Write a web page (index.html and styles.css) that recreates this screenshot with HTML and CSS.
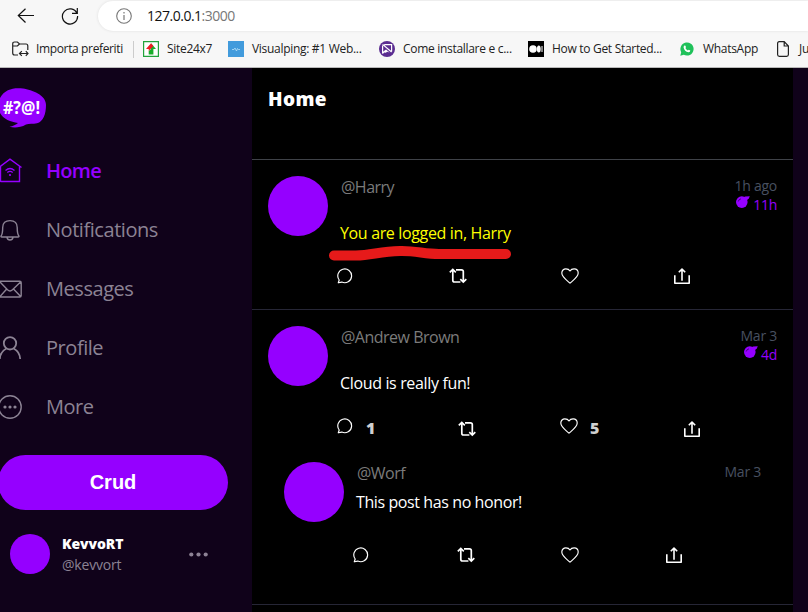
FILE: index.html
```html
<!DOCTYPE html>
<html lang="en">
<head>
<meta charset="utf-8">
<title>Home</title>
<link rel="stylesheet" href="styles.css">
</head>
<body>
<svg width="0" height="0" class="defs">
  <symbol id="reply" viewBox="0 0 16 16"><path d="M1.3 14.8 2.2 12A6.9 6.9 0 1 1 4.8 14.1Z" fill="none" stroke="currentColor" stroke-width="1.15" stroke-linejoin="round"/></symbol>
  <symbol id="repost" viewBox="0 0 18 16"><path d="M3.8 2.2V12.2Q3.8 14 5.6 14H11.4M.8 4.4 3.8 1.5 6.8 4.4M7 1.8H12.4Q14.3 1.8 14.3 3.6V13.5M11.3 11.2 14.3 14.1 17.3 11.2" fill="none" stroke="currentColor" stroke-width="1.7"/></symbol>
  <symbol id="heart" viewBox="0 0 18 16"><path d="M9 15.2C6.4 12.8.8 9.2.8 5.1.8 2.5 2.6.8 4.9.8 6.7.8 8.2 1.6 9 3 9.8 1.6 11.3.8 13.1.8c2.3 0 4.1 1.7 4.1 4.3 0 4.1-5.6 7.7-8.2 10.1Z" fill="none" stroke="currentColor" stroke-width="1.15" stroke-linejoin="round"/></symbol>
  <symbol id="share" viewBox="0 0 16 16"><path d="M.8 7.3V15.2H15.2V7.3M8 12.7V1.2M4.8 4.3 8 1.1 11.2 4.3" fill="none" stroke="currentColor" stroke-width="1.6" stroke-linejoin="round"/></symbol>
  <symbol id="bomb" viewBox="0 0 14 12"><circle cx="5.8" cy="6.1" r="5.8" fill="currentColor"/><path d="M7 1.6 9.2.4 13.8.2 12.8 2.4 10.6 4.4Z" fill="currentColor"/><path d="M2.2 5.5Q2.8 3.3 5 2.8" fill="none" stroke="#000" stroke-width=".5"/></symbol>
</svg>

<header class="browser">
  <div class="toolbar">
    <svg class="back" width="18" height="16" viewBox="0 0 18 16"><path d="M17 7.5H1.5M8.5.8 1.3 7.5 8.5 14.5" fill="none" stroke="#111" stroke-width="1.2"/></svg>
    <svg class="reload" width="18" height="18" viewBox="0 0 18 18"><path d="M15.9 6.2A7.6 7.6 0 1 0 16.6 9M16.3 1V6.3H11" fill="none" stroke="#111" stroke-width="1.2"/></svg>
    <div class="address">
      <svg width="16" height="16" viewBox="0 0 16 16"><circle cx="8" cy="8" r="7.3" fill="none" stroke="#777" stroke-width="1.1"/><path d="M8 7V12M8 4V5.4" stroke="#777" stroke-width="1.2"/></svg>
      <span class="url">127.0.0.1<span class="port">:3000</span></span>
    </div>
  </div>
  <nav class="bookmarks">
    <a class="bm import"><svg width="17" height="16" viewBox="0 0 17 16"><path d="M6 14H2.6Q.7 14 .7 12V3Q.7 1 2.6 1H5.4L7.5 3H14Q15.8 3 15.8 5V9M.7 5H5.4L7.5 3M7.5 12.5H16M9.8 10.2 7.5 12.5 9.8 14.8M13.8 10.2 16 12.5 13.8 14.8" fill="none" stroke="#222" stroke-width="1.2"/></svg><span>Importa preferiti</span></a>
    <a class="bm site"><svg width="16" height="16" viewBox="0 0 16 16"><path d="M.6.6H15.4V15.4H.6Z" fill="#fff" stroke="#22a33c" stroke-width="1.2"/><path d="M8 2.2 13 8H10.4V13.5H5.7V10L8 8Z" fill="#19ad2b"/><path d="M8 2.2 3 8H5.7V10L10.4 5Z" fill="#ed1c24"/></svg><span>Site24x7</span></a>
    <a class="bm visual"><svg width="16" height="16" viewBox="0 0 16 16"><path d="M0 0H16V16H0Z" fill="#429bdc"/><path d="M4 8.5H6L7 7 8.5 10 9.5 7.5 10.3 8.5H12" fill="none" stroke="#b8e1f8" stroke-width=".8"/></svg><span>Visualping: #1 Web...</span></a>
    <a class="bm come"><svg width="16" height="16" viewBox="0 0 16 16"><circle cx="8" cy="8" r="8" fill="#5b2d91"/><path d="M3.6 3.4 12.6 11M5.2 3.6H12.6V10.6M3.6 4.6V12.4" fill="none" stroke="#fff" stroke-width="1.2"/><path d="M3.6 13V11L7 8.4 10.6 11.6 8.2 10.8 6.8 11.8 5.4 11.4Z" fill="#fff"/></svg><span>Come installare e c...</span></a>
    <a class="bm how"><svg width="16" height="16" viewBox="0 0 16 16"><path d="M0 0H16V16H0Z" fill="#000"/><circle cx="5" cy="8" r="3.8" fill="#fff"/><ellipse cx="10.8" cy="8" rx="1.9" ry="3.6" fill="#fff"/><path d="M14 5V11" stroke="#fff"/></svg><span>How to Get Started...</span></a>
    <a class="bm whats"><svg width="14" height="14" viewBox="0 0 14 14"><path d="M.3 13.7 1.2 10.2A6.6 6.6 0 1 1 3.8 12.8Z" fill="#1fc15a"/><path d="M4.4 3.5 5.5 3.7 6 5.3 5.4 6.1Q6.2 7.8 7.9 8.5L8.7 7.8 10.3 8.6Q10.3 10.4 8.4 10.3 4.4 9.6 3.6 5.5 3.6 4.2 4.4 3.5Z" fill="#fff"/></svg><span>WhatsApp</span></a>
    <a class="bm page"><svg width="12" height="16" viewBox="0 0 12 16"><path d="M2.3.7H7.2L11.4 5V13.5Q11.4 15.3 9.6 15.3H2.4Q.6 15.3.6 13.5V2.5Q.6.7 2.3.7ZM7.2.7V5H11.4" fill="none" stroke="#222" stroke-width="1.2"/></svg><span>Ju</span></a>
  </nav>
</header>

<div class="app">
  <aside class="sidebar">
    <svg class="logo" width="46" height="40" viewBox="0 0 46 40"><path d="M0 10C5 1 14-.5 23 .6 32 2 46 7 46 17 46 26 43 34 37 35.2 33 36 29 35.5 26 36.5 20 40 14 40 9.5 38.8 13 38 16 37 18 35 11 34 3 31 0 25Z" fill="#9500ff"/><text x="3" y="25.5" textLength="37" lengthAdjust="spacingAndGlyphs">#?@!</text></svg>
    <nav class="menu">
      <a class="active"><svg width="22" height="25" viewBox="0 0 22 25"><path d="M.5 24V8.5M19.5 8.5V23.5H.5M-1 9.5 10 1.2 21.5 9.5" fill="none" stroke="currentColor" stroke-width="1.4"/><path d="M5.5 12.5Q10 8.5 14.5 12.5M7.3 14.5Q10 12.3 12.7 14.5" fill="none" stroke="currentColor" stroke-width="1.2"/><circle cx="10" cy="17" r="1.1" fill="currentColor"/></svg><span>Home</span></a>
      <a><svg width="22" height="24" viewBox="0 0 22 24"><path d="M.9 18.3C2.5 16.5 2.7 14 2.7 9.5 2.7 5 5.5 2.6 10 2.6S17.2 5 17.2 9.5C17.2 14 17.5 16.5 19 18.3Q18.8 19 17.8 19H2Q1 19 .9 18.3ZM7 19.5Q7.5 22 10 22T13 19.5" fill="none" stroke="currentColor" stroke-width="1.4"/></svg><span>Notifications</span></a>
      <a><svg width="22" height="24" viewBox="0 0 22 24"><path d="M-1 4.2H19.7Q21.2 4.2 21.2 5.7V18.5Q21.2 20 19.7 20H-1M0 5 7.5 12.8Q10 15.2 12.5 12.8L20.8 4.8M0 19.5 6.7 12M20.7 19.5 13.5 12" fill="none" stroke="currentColor" stroke-width="1.4"/></svg><span>Messages</span></a>
      <a><svg width="22" height="24" viewBox="0 0 22 24"><circle cx="10" cy="7.3" r="6.2" fill="none" stroke="currentColor" stroke-width="1.8"/><path d="M-.2 23Q0 16 6.4 12.5M20.2 23Q20 16 13.6 12.5" fill="none" stroke="currentColor" stroke-width="1.8"/></svg><span>Profile</span></a>
      <a><svg width="22" height="24" viewBox="0 0 22 24"><circle cx="10" cy="12" r="11.2" fill="none" stroke="currentColor" stroke-width="1.4"/><circle cx="5" cy="12" r="1.6" fill="currentColor"/><circle cx="10" cy="12" r="1.6" fill="currentColor"/><circle cx="15" cy="12" r="1.6" fill="currentColor"/></svg><span>More</span></a>
    </nav>
    <button class="crud">Crud</button>
    <div class="profile">
      <div class="avatar small"></div>
      <div class="who"><b>KevvoRT</b><span>@kevvort</span></div>
      <svg width="19" height="5" viewBox="0 0 19 5" fill="#8d8295"><circle cx="2.3" cy="2.5" r="2.1"/><circle cx="9.5" cy="2.5" r="2.1"/><circle cx="16.7" cy="2.5" r="2.1"/></svg>
    </div>
  </aside>

  <main class="feed">
    <h1>Home</h1>
    <article class="post">
      <div class="body">
        <div class="avatar"></div>
        <div class="content">
          <span class="handle">@Harry</span>
          <p class="text yellow">You are logged in, Harry
            <svg class="underline" width="184" height="18" viewBox="0 0 184 18"><path d="M6 10.5H28C44 10 52 6.5 72 6 88 5.6 96 9 111 9H178" fill="none" stroke="#e61a1a" stroke-width="10" stroke-linecap="round" stroke-linejoin="round"/></svg></p>
        </div>
        <div class="dates"><span>1h ago</span><span class="ttl"><svg width="14" height="12"><use href="#bomb"/></svg>11h</span></div>
      </div>
      <div class="actions">
        <span><svg width="16" height="16"><use href="#reply"/></svg></span>
        <span><svg width="18" height="16"><use href="#repost"/></svg></span>
        <span><svg width="18" height="16"><use href="#heart"/></svg></span>
        <span><svg width="16" height="16"><use href="#share"/></svg></span>
      </div>
    </article>
    <article class="post thread">
      <div class="body">
        <div class="avatar"></div>
        <div class="content">
          <span class="handle andrew">@Andrew Brown</span>
          <p class="text">Cloud is really fun!</p>
        </div>
        <div class="dates"><span>Mar 3</span><span class="ttl"><svg width="14" height="12"><use href="#bomb"/></svg>4d</span></div>
      </div>
      <div class="actions counted">
        <span class="has-count"><svg width="16" height="16"><use href="#reply"/></svg><b>1</b></span>
        <span><svg width="18" height="16"><use href="#repost"/></svg></span>
        <span class="has-count"><svg width="18" height="16"><use href="#heart"/></svg><b>5</b></span>
        <span><svg width="16" height="16"><use href="#share"/></svg></span>
      </div>
      <section class="answer">
        <div class="body">
          <div class="avatar"></div>
          <div class="content">
            <span class="handle">@Worf</span>
            <p class="text">This post has no honor!</p>
          </div>
          <div class="dates"><span>Mar 3</span></div>
        </div>
        <div class="actions nested">
          <span><svg width="16" height="16"><use href="#reply"/></svg></span>
          <span><svg width="18" height="16"><use href="#repost"/></svg></span>
          <span><svg width="18" height="16"><use href="#heart"/></svg></span>
          <span><svg width="16" height="16"><use href="#share"/></svg></span>
        </div>
      </section>
    </article>
  </main>
</div>
</body>
</html>
```
FILE: styles.css
```css
* { box-sizing: border-box; }
body { margin: 0; width: 808px; height: 612px; overflow: hidden; background: #10021a; font-family: "Open Sans", "Noto Sans", sans-serif; }
svg { display: block; flex: none; }
.defs { position: absolute; }

.browser { height: 68px; background: #f7f7f7; border-bottom: 1px solid #b9b9b9; overflow: hidden; }
.toolbar { display: flex; align-items: center; height: 31px; }
.back { margin-left: 17px; }
.reload { margin-left: 26px; }
.address { display: flex; align-items: center; align-self: stretch; flex: 1; margin: 1px 0 0 19px; padding-left: 18px; border-radius: 15px 0 0 15px; background: #fff; box-shadow: 0 0 3px #ddd; font-size: 14px; color: #111; }
.url { margin: -1px 0 0 15px; letter-spacing: -.5px; white-space: nowrap; }
.port { color: #777; }
.bookmarks { display: grid; grid-template-columns: 131px 85px 151px 149px 152px 97px 60px; height: 36px; align-items: center; padding-left: 12px; font-size: 12px; color: #222; }
.bm { display: flex; align-items: center; gap: 8px; height: 17px; white-space: nowrap; letter-spacing: -.3px; }
.bm span { margin-top: -1px; }
.import { gap: 7px; margin-right: 9px; border-right: 1px solid #ccc; letter-spacing: -.36px; }
.whats { gap: 9px; letter-spacing: -.3px; }
.page { gap: 10px; }

.app { display: grid; grid-template-columns: 252px 541px; height: 544px; }
.sidebar { padding-top: 20px; overflow: hidden; background: #10021a; }
.logo text { font: bold 17px "Open Sans", sans-serif; fill: #fff; }
.menu { margin-top: 13px; color: #8c8394; }
.menu a { display: flex; align-items: center; height: 59px; font-size: 20px; }
.menu span { margin-left: 24px; letter-spacing: -.45px; }
.menu .active { color: #9500ff; font-weight: 600; }
.menu .active span { letter-spacing: -.7px; }
.crud { display: block; width: 230px; height: 55px; margin: 19px 0 0 -2px; border: 0; border-radius: 28px; background: #9500ff; color: #fff; font: bold 20px "Liberation Sans", sans-serif; }
.profile { display: flex; align-items: center; width: 208px; margin-top: 23px; padding-left: 10px; }
.who { display: flex; flex-direction: column; flex: 1; margin-left: 12px; font-size: 14px; line-height: 21px; color: #8c8394; }
.who b { font-weight: 800; color: #fff; letter-spacing: -.1px; }
.who span { letter-spacing: -.2px; }
.avatar { flex: none; width: 60px; height: 60px; border-radius: 50%; background: #9500ff; }
.avatar.small { width: 40px; height: 40px; }

.feed { background: #000; color: #fff; overflow: hidden; }
h1 { height: 92px; margin: 0; padding: 18px 16px; border-bottom: 1px solid #3f4248; font-size: 19px; line-height: 26px; font-weight: 800; letter-spacing: .4px; }
.post { height: 150px; padding-top: 16px; border-bottom: 1px solid #262636; }
.thread { height: 295px; }
.body { display: flex; height: 80px; padding: 0 16px; }
.content { flex: 1; margin: -1px 0 0 13px; font-size: 16px; line-height: 24px; }
.handle { display: block; color: #7b7b7b; letter-spacing: -.5px; }
.text { position: relative; margin: 22px 0 0 -1px; letter-spacing: -.35px; white-space: nowrap; }
.answer .text { letter-spacing: -.4px; }
.yellow { color: #ff0; }
.underline { position: absolute; left: -12px; top: 24px; }
.dates { display: flex; flex-direction: column; align-items: flex-end; font-size: 14px; line-height: 18px; padding-top: 1px; color: #485060; letter-spacing: -.25px; }
.ttl { display: flex; gap: 3px; margin-top: 1px; color: #9500ff; }
.actions { display: grid; grid-template-columns: 112px 112px 113px 16px; height: 16px; margin: 12px 0 0 85px; }
.counted { grid-template-columns: 121px 102px 124px 16px; height: 22px; margin-top: 11px; }
.counted > span { padding-top: 4px; }
.counted > .has-count { display: flex; align-items: flex-start; padding-top: 0; gap: 12px; font-size: 16px; line-height: 23px; color: #d0d0d0; }
.has-count:first-child { gap: 13px; }
.has-count svg { margin-top: 1px; color: #fff; }
.has-count b { font-weight: 800; }
.answer { margin-top: 23px; padding: 0 16px; }
.answer .text { margin-top: 5px; }
.nested { grid-template-columns: 104px 104px 105px 16px; margin-top: 5px; }
```
